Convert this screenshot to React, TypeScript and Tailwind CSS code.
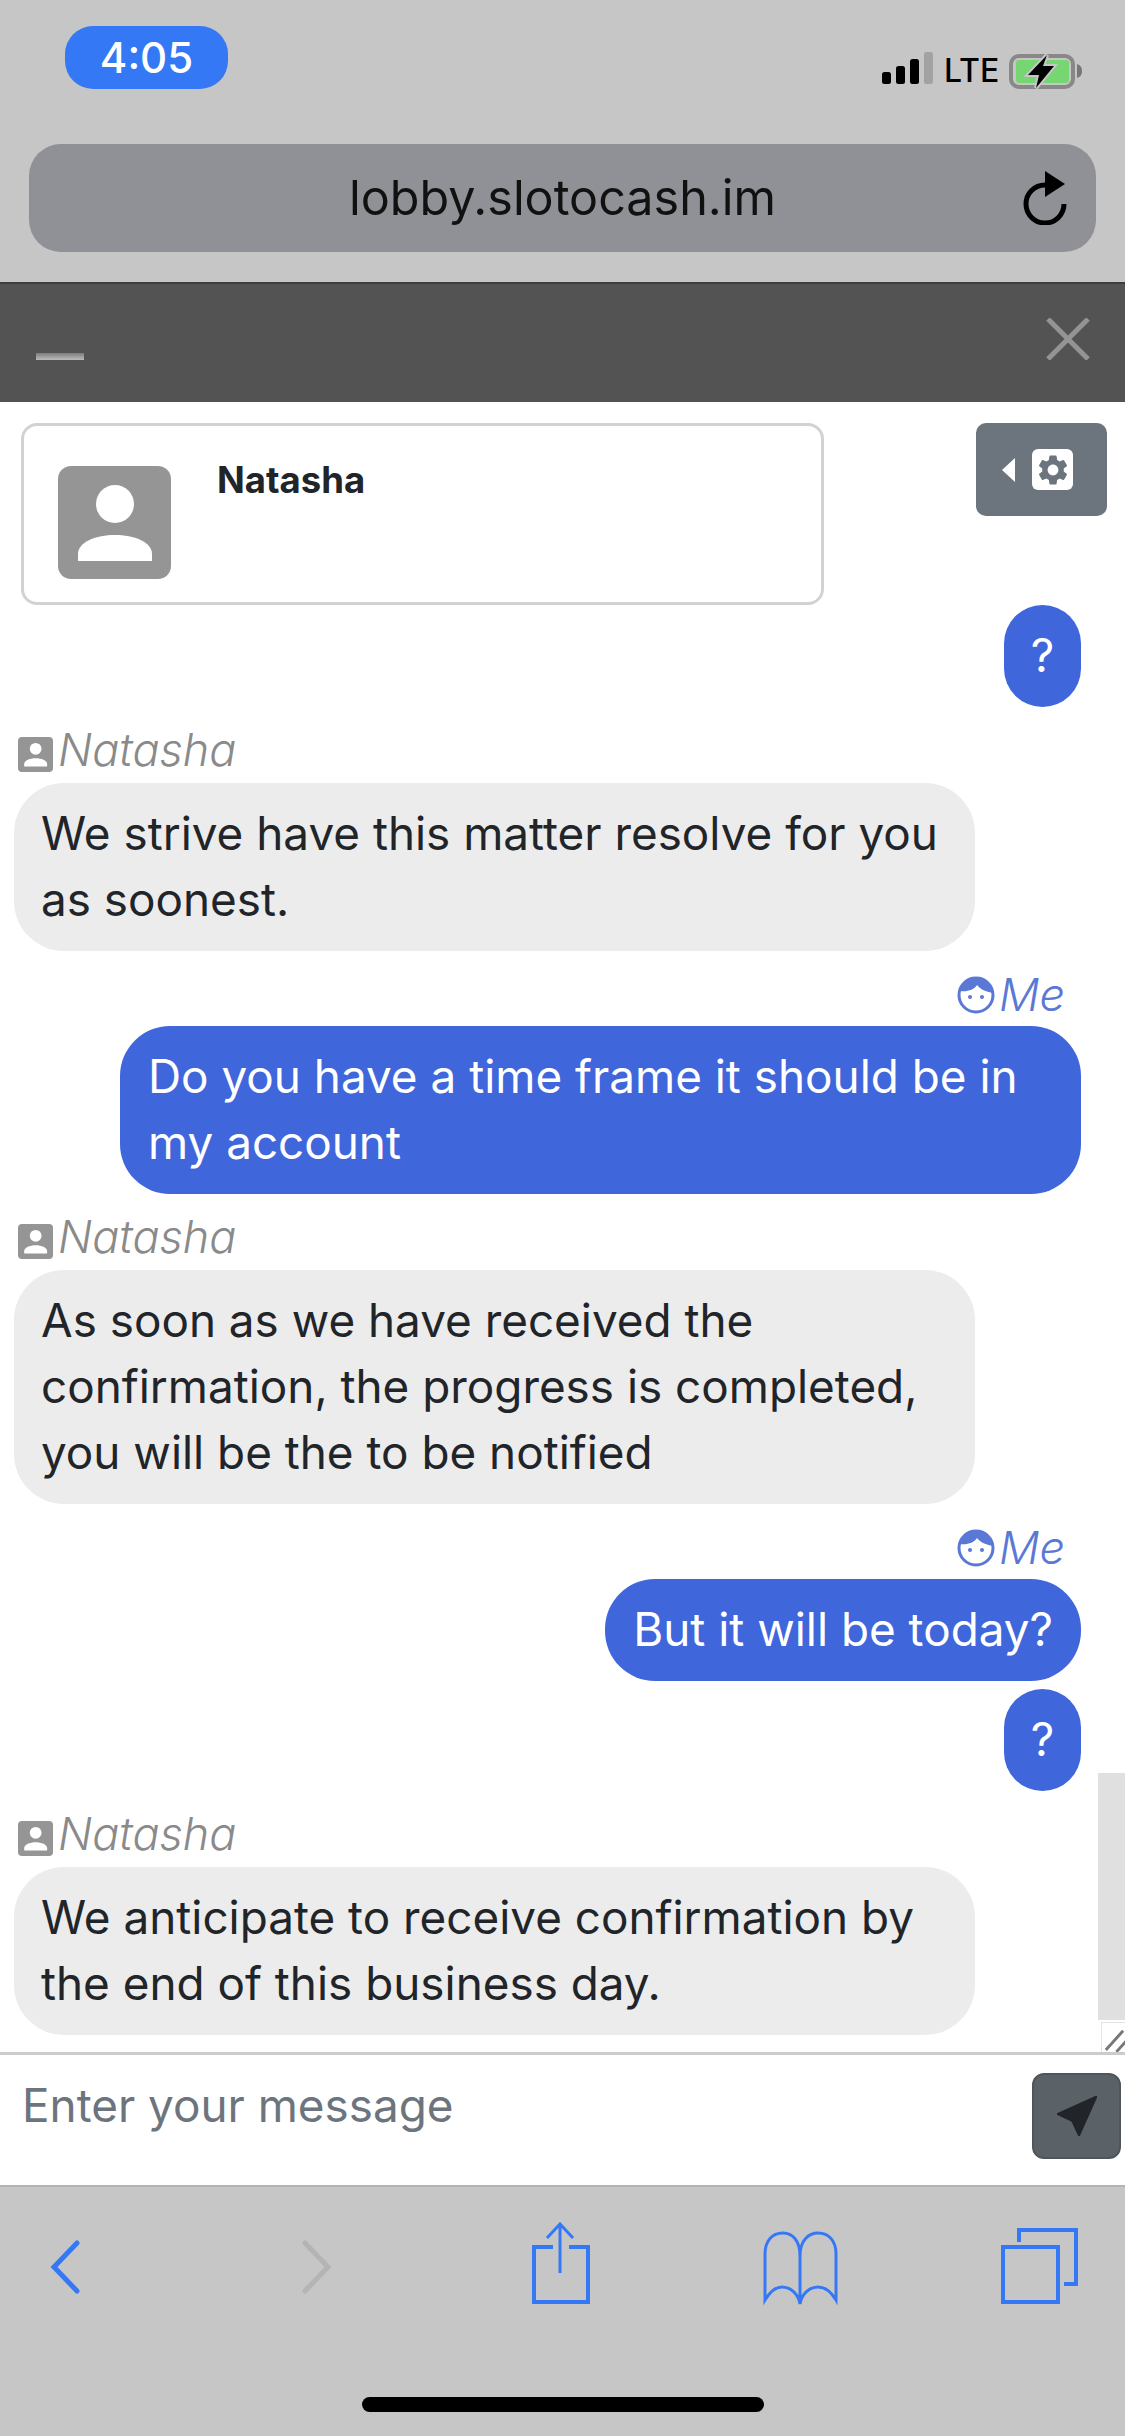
import { MdSettings } from "react-icons/md";

const FONT = "font-['Inter','Noto_Sans',sans-serif]";

function PersonIcon({ className }: { className: string }) {
  return (
    <svg viewBox="0 0 113 113" className={className}>
      <rect width="113" height="113" rx="13" fill="#959595" />
      <ellipse cx="57" cy="38" rx="19" ry="19" fill="#fff" />
      <path d="M20 95V88C20 76 38 69 57 69C76 69 94 76 94 88V95Z" fill="#fff" />
    </svg>
  );
}

function FaceIcon() {
  return (
    <svg viewBox="0 0 38 38" className="h-[38px] w-[38px] shrink-0">
      <circle cx="19" cy="19" r="17" fill="#fff" stroke="#5a78d6" strokeWidth="3" />
      <path d="M3 15C5 6 12 2 19 2C28 2 35 8 36 17C30 16 24 14 20 9C17 14 10 16 3 15Z" fill="#5a78d6" />
      <circle cx="13" cy="21" r="2" fill="#5a78d6" />
      <circle cx="25" cy="21" r="2" fill="#5a78d6" />
    </svg>
  );
}

function StatusIcons() {
  return (
    <div className="mt-[26px] flex items-start">
      <svg viewBox="882 53 51 32" className="h-[32px] w-[51px]">
        <rect x="882" y="73" width="9" height="12" rx="2.5" fill="#000" />
        <rect x="896" y="67" width="9" height="18" rx="2.5" fill="#000" />
        <rect x="910" y="60" width="9" height="25" rx="2.5" fill="#000" />
        <rect x="924" y="53" width="9" height="32" rx="2.5" fill="#a2a2a2" />
      </svg>
      <span className="ml-[11px] w-[52px] text-[32px] font-medium leading-[38px] text-black">LTE</span>
      <svg viewBox="1009 50 74 38" className="ml-[13px] h-[38px] w-[74px]">
        <rect x="1011" y="54" width="62" height="31" rx="8" fill="none" stroke="#888" strokeWidth="4" />
        <rect x="1016" y="58" width="53" height="23" rx="3" fill="#76d672" />
        <path d="M1077 62C1080 63 1082 65 1082 69C1082 73 1080 75 1077 76Z" fill="#777" />
        <path d="M1047 53L1028 73H1039L1036 86L1054 64H1043Z" fill="#000" stroke="#c6c6c6" strokeWidth="4" paintOrder="stroke" />
      </svg>
    </div>
  );
}

function Incoming({ lines }: { lines: string[] }) {
  return (
    <div className="mt-[25px] flex flex-col items-start">
      <div className="flex h-[51px] items-start pl-[4px]">
        <PersonIcon className="mt-[5px] h-[35px] w-[35px] shrink-0" />
        <span className="ml-[5px] mt-[-2px] text-[45px] font-light italic leading-[40px] text-[#8a8a8a]">Natasha</span>
      </div>
      <div className="w-[961px] rounded-[50px] bg-[#ececec] px-[27px] py-[18px] text-[#212529]">
        {lines.map((l) => (
          <div key={l}>{l}</div>
        ))}
      </div>
    </div>
  );
}

function Outgoing({ lines, wide }: { lines: string[]; wide?: boolean }) {
  return (
    <div className="mt-[25px] flex flex-col items-end pr-[44px]">
      <div className="flex h-[50px] items-start pr-[16px]">
        <FaceIcon />
        <span className="ml-[4px] text-[45px] font-light italic leading-[38px] text-[#5a78d6]">Me</span>
      </div>
      <Bubble lines={lines} wide={wide} />
    </div>
  );
}

function Bubble({ lines, wide }: { lines: string[]; wide?: boolean }) {
  return (
    <div className={`rounded-[50px] bg-[#4066dc] px-[28px] py-[18px] text-white ${wide ? "w-[961px]" : ""}`}>
      {lines.map((l) => (
        <div key={l}>{l}</div>
      ))}
    </div>
  );
}

function Question() {
  return (
    <div className="w-[77px] rounded-[50px] bg-[#4066dc] py-[18px] text-center text-white">?</div>
  );
}

export default function App() {
  return (
    <div className={`flex h-[2436px] w-[1125px] flex-col overflow-hidden bg-white ${FONT}`}>
      {/* Safari top chrome */}
      <div className="h-[282px] shrink-0 bg-[#c6c6c6]">
        <div className="flex h-[144px] items-start justify-between pl-[65px] pr-[42px] pt-[26px]">
          <div className="flex h-[63px] w-[163px] items-center justify-center rounded-[28px] bg-[#3478f6] text-[42px] font-medium text-white">
            4:05
          </div>
          <StatusIcons />
        </div>
        <div className="relative mx-[29px] flex h-[108px] items-center justify-center rounded-[32px] bg-[#909196] text-[48.5px] text-[#111]">
          lobby.slotocash.im
          <svg viewBox="0 0 48 54" className="absolute right-[27px] top-[27px] h-[54px] w-[48px]">
            <path d="M24 14A19 19 0 1 0 43 33" fill="none" stroke="#000" strokeWidth="5" />
            <path d="M24 0L44 13L24 26Z" fill="#000" />
          </svg>
        </div>
      </div>

      {/* Chat window title bar */}
      <div className="flex h-[120px] shrink-0 items-end justify-between border-t-2 border-[#3d3d3d] bg-[#535353] pb-[42px] pl-[36px] pr-[35px]">
        <div className="h-[7px] w-[48px] bg-gradient-to-b from-[#7d7d7d] to-[#bcbcbc]" />
        <svg viewBox="0 0 44 42" className="h-[42px] w-[44px]">
          <path d="M2 1L42 41M42 1L2 41" stroke="#949494" strokeWidth="5" fill="none" />
        </svg>
      </div>

      {/* Messages */}
      <div className="relative h-[1650px] shrink-0 overflow-hidden pl-[14px] text-[45.85px] leading-[66px]">
        <div className="flex items-start justify-between pr-[18px] pl-[7px] pt-[21px]">
          <div className="flex h-[182px] w-[803px] rounded-[16px] border-[3px] border-[#d2d2d2] pl-[34px] pt-[40px]">
            <PersonIcon className="h-[113px] w-[113px]" />
            <span className="ml-[46px] mt-[-11px] text-[36.5px] font-bold leading-[50px] text-[#212529]">Natasha</span>
          </div>
          <div className="flex h-[93px] w-[131px] items-center gap-[17px] rounded-[10px] bg-[#6c757d] pl-[26px]">
            <div className="h-0 w-0 border-y-[12px] border-r-[13px] border-y-transparent border-r-white" />
            <div className="flex h-[41px] w-[41px] items-center justify-center rounded-[6px] bg-white">
              <MdSettings className="h-[36px] w-[36px] text-[#6c757d]" />
            </div>
          </div>
        </div>

        <div className="flex justify-end pr-[44px]">
          <Question />
        </div>

        <Incoming lines={["We strive have this matter resolve for you", "as soonest."]} />
        <Outgoing wide lines={["Do you have a time frame it should be in", "my account"]} />
        <Incoming lines={["As soon as we have received the", "confirmation, the progress is completed,", "you will be the to be notified"]} />
        <Outgoing lines={["But it will be today?"]} />
        <div className="mt-[8px] flex justify-end pr-[44px]">
          <Question />
        </div>
        <Incoming lines={["We anticipate to receive confirmation by", "the end of this business day."]} />

        {/* scrollbar track and textarea resizer */}
        <div className="absolute bottom-[32px] right-0 h-[247px] w-[27px] bg-[#e0e0e0]" />
        <svg viewBox="0 0 24 30" className="absolute bottom-0 right-0 h-[30px] w-[24px] border-l border-t border-[#e4e4e4]">
          <path d="M4 28L22 8M15 30L26 18" stroke="#777" strokeWidth="3" fill="none" />
        </svg>
      </div>

      {/* Input */}
      <div className="flex h-[135px] shrink-0 items-start justify-between border-t-[3px] border-b-2 border-t-[#cccccc] border-b-[#b4b4b4] pl-[22px] pr-[4px] pt-[18px]">
        <input
          readOnly
          placeholder="Enter your message"
          className="h-[66px] w-[800px] bg-transparent text-[45.85px] leading-[66px] text-[#212529] outline-none placeholder:text-[#6c757d]"
        />
        <button className="flex h-[86px] w-[89px] items-center justify-center rounded-[12px] border-2 border-[#4e555b] bg-[#5a6268]">
          <svg viewBox="1056 2095 40 40" className="h-[40px] w-[40px]">
            <path d="M1096 2095L1056 2113L1071 2120L1078 2135Z" fill="#212529" stroke="#212529" strokeWidth="1.5" strokeLinejoin="round" />
          </svg>
        </button>
      </div>

      {/* Safari bottom toolbar */}
      <div className="flex flex-1 flex-col bg-[#c6c6c6]">
        <div className="flex items-start pl-[50px] pt-[35px]">
          <svg viewBox="50 2224 32 86" className="h-[86px] w-[32px]">
            <path d="M77 2245L54 2269L77 2293" fill="none" stroke="#3478f6" strokeWidth="5" strokeLinecap="round" />
          </svg>
          <svg viewBox="300 2224 32 86" className="ml-[218px] h-[86px] w-[32px]">
            <path d="M305 2245L328 2269L305 2293" fill="none" stroke="#b4b4b4" strokeWidth="5" strokeLinecap="round" />
          </svg>
          <svg viewBox="530 2224 62 86" className="ml-[198px] h-[86px] w-[62px]">
            <path d="M553 2249H534V2304H588V2249H569" fill="none" stroke="#3478f6" strokeWidth="4" />
            <path d="M560 2226V2275M547 2240L560 2226L573 2240" fill="none" stroke="#3478f6" strokeWidth="3" />
          </svg>
          <svg viewBox="761 2224 80 86" className="ml-[169px] h-[86px] w-[80px]">
            <path
              d="M800 2258C800 2242 792 2235 783 2235C772 2235 765 2243 765 2256V2302C771 2292 777 2289 782 2289C790 2289 798 2295 800 2306C802 2295 810 2289 818 2289C824 2289 830 2292 836 2302V2256C836 2243 829 2235 818 2235C809 2235 800 2242 800 2258V2306"
              fill="none"
              stroke="#3478f6"
              strokeWidth="3"
            />
          </svg>
          <svg viewBox="1000 2224 80 86" className="ml-[159px] h-[86px] w-[80px]">
            <path d="M1019 2244V2232H1076V2286H1064" fill="none" stroke="#3478f6" strokeWidth="4" />
            <rect x="1003" y="2249" width="55" height="55" fill="none" stroke="#3478f6" strokeWidth="4" />
          </svg>
        </div>
        <div className="mx-auto mb-[24px] mt-auto h-[15px] w-[402px] rounded-full bg-black" />
      </div>
    </div>
  );
}
